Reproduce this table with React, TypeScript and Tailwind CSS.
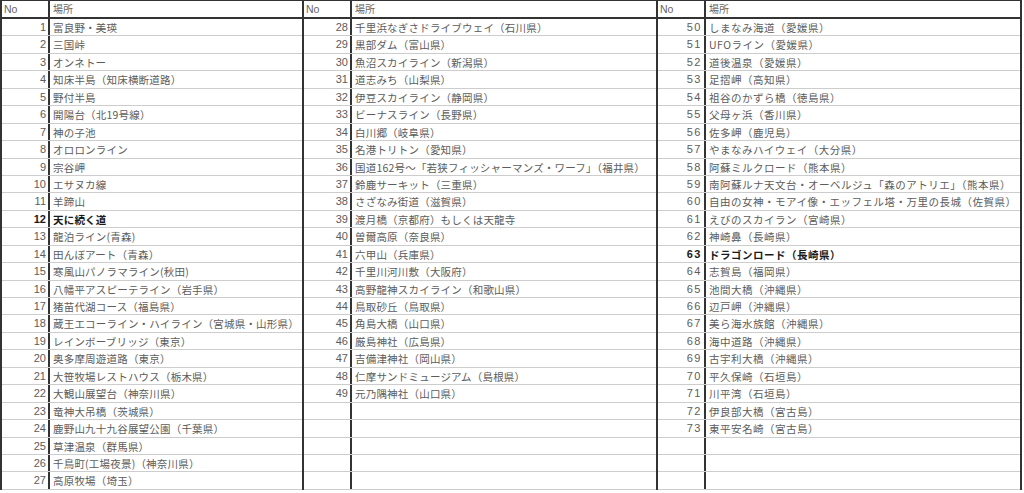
const table1: [number, string][] = [
  [1, "富良野・美瑛"],
  [2, "三国峠"],
  [3, "オンネトー"],
  [4, "知床半島（知床横断道路）"],
  [5, "野付半島"],
  [6, "開陽台（北19号線）"],
  [7, "神の子池"],
  [8, "オロロンライン"],
  [9, "宗谷岬"],
  [10, "エサヌカ線"],
  [11, "羊蹄山"],
  [12, "天に続く道"],
  [13, "龍泊ライン(青森)"],
  [14, "田んぼアート（青森）"],
  [15, "寒風山パノラマライン(秋田)"],
  [16, "八幡平アスピーテライン（岩手県）"],
  [17, "猪苗代湖コース（福島県）"],
  [18, "蔵王エコーライン・ハイライン（宮城県・山形県）"],
  [19, "レインボーブリッジ（東京）"],
  [20, "奥多摩周遊道路（東京）"],
  [21, "大笹牧場レストハウス（栃木県）"],
  [22, "大観山展望台（神奈川県）"],
  [23, "竜神大吊橋（茨城県）"],
  [24, "鹿野山九十九谷展望公園（千葉県）"],
  [25, "草津温泉（群馬県）"],
  [26, "千鳥町(工場夜景)（神奈川県）"],
  [27, "高原牧場（埼玉）"],
];

const table2: [number, string][] = [
  [28, "千里浜なぎさドライブウェイ（石川県）"],
  [29, "黒部ダム（富山県）"],
  [30, "魚沼スカイライン（新潟県）"],
  [31, "道志みち（山梨県）"],
  [32, "伊豆スカイライン（静岡県）"],
  [33, "ビーナスライン（長野県）"],
  [34, "白川郷（岐阜県）"],
  [35, "名港トリトン（愛知県）"],
  [36, "国道162号～「若狭フィッシャーマンズ・ワーフ」（福井県）"],
  [37, "鈴鹿サーキット（三重県）"],
  [38, "さざなみ街道（滋賀県）"],
  [39, "渡月橋（京都府）もしくは天龍寺"],
  [40, "曽爾高原（奈良県）"],
  [41, "六甲山（兵庫県）"],
  [42, "千里川河川敷（大阪府）"],
  [43, "高野龍神スカイライン（和歌山県）"],
  [44, "鳥取砂丘（鳥取県）"],
  [45, "角島大橋（山口県）"],
  [46, "厳島神社（広島県）"],
  [47, "吉備津神社（岡山県）"],
  [48, "仁摩サンドミュージアム（島根県）"],
  [49, "元乃隅神社（山口県）"],
];

const table3: [number, string][] = [
  [50, "しまなみ海道（愛媛県）"],
  [51, "UFOライン（愛媛県）"],
  [52, "道後温泉（愛媛県）"],
  [53, "足摺岬（高知県）"],
  [54, "祖谷のかずら橋（徳島県）"],
  [55, "父母ヶ浜（香川県）"],
  [56, "佐多岬（鹿児島）"],
  [57, "やまなみハイウェイ（大分県）"],
  [58, "阿蘇ミルクロード（熊本県）"],
  [59, "南阿蘇ルナ天文台・オーベルジュ「森のアトリエ」（熊本県）"],
  [60, "自由の女神・モアイ像・エッフェル塔・万里の長城（佐賀県）"],
  [61, "えびのスカイラン（宮崎県）"],
  [62, "神崎鼻（長崎県）"],
  [63, "ドラゴンロード（長崎県）"],
  [64, "志賀島（福岡県）"],
  [65, "池間大橋（沖縄県）"],
  [66, "辺戸岬（沖縄県）"],
  [67, "美ら海水族館（沖縄県）"],
  [68, "海中道路（沖縄県）"],
  [69, "古宇利大橋（沖縄県）"],
  [70, "平久保崎（石垣島）"],
  [71, "川平湾（石垣島）"],
  [72, "伊良部大橋（宮古島）"],
  [73, "東平安名崎（宮古島）"],
];

const BOLD = [12, 63];
const ROWS = 27;

function SpotTable({
  rows,
  widthClass,
  last,
  spaced,
}: {
  rows: [number, string][];
  widthClass: string;
  last?: boolean;
  spaced?: boolean;
}) {
  const filled: ([number, string] | null)[] = [...rows];
  while (filled.length < ROWS) filled.push(null);

  return (
    <div
      className={`${widthClass} flex flex-col border-l-2 border-[#333] ${last ? "border-r-2" : ""}`}
    >
      {/* header */}
      <div className="flex h-[18px] border-b-2 border-[#333] text-[#666]">
        <div className="w-[48px] shrink-0 border-r-2 border-[#333] pl-[2px] leading-[16px] font-['Liberation_Sans',sans-serif] text-[10.5px]">
          No
        </div>
        <div className="flex-1 pl-[3px] leading-[16px] text-[10px]">場所</div>
      </div>

      {filled.map((r, i) => {
        const bold = r !== null && BOLD.includes(r[0]);
        return (
          <div
            key={i}
            className={`flex h-[17.45px] border-b border-[#cdcdcd] ${bold ? "font-bold text-[#1a1a1a]" : "text-[#5c5c5c]"}`}
          >
            <div
              className={`w-[48px] shrink-0 border-r-2 border-[#333] pr-[2px] text-right leading-[17px] font-['Liberation_Sans',sans-serif] text-[11px] ${spaced ? "tracking-[1.5px]" : ""}`}
            >
              {r ? r[0] : ""}
            </div>
            <div
              className={`flex-1 overflow-hidden whitespace-nowrap pl-[3px] leading-[17px] text-[10.5px] ${spaced ? "tracking-[0.5px]" : "tracking-[0.2px]"}`}
            >
              {r ? r[1] : ""}
            </div>
          </div>
        );
      })}
    </div>
  );
}

export default function App() {
  return (
    <div className="h-[493px] w-[1024px] overflow-hidden bg-white font-['Noto_Sans_CJK_JP','Noto_Sans',sans-serif]">
      <div className="flex w-[1022px] border-t border-[#333]">
        <SpotTable rows={table1} widthClass="w-[302px]" />
        <SpotTable rows={table2} widthClass="w-[354px]" />
        <SpotTable rows={table3} widthClass="w-[366px]" last spaced />
      </div>
    </div>
  );
}
